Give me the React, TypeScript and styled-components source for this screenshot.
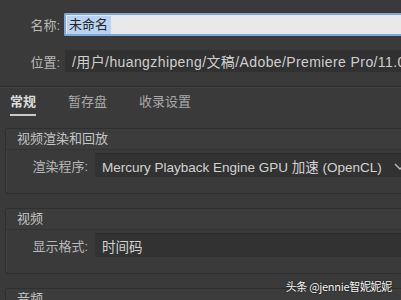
import React from 'react'
import styled, { createGlobalStyle } from 'styled-components'

const GlobalStyle = createGlobalStyle`
  html, body {
    margin: 0;
    padding: 0;
    background: #3a3a3a;
  }
  body {
    font-family: "Liberation Sans", "Noto Sans CJK SC", sans-serif;
    -webkit-font-smoothing: antialiased;
  }
`

const Page = styled.div`
  position: relative;
  width: 401px;
  height: 300px;
  overflow: hidden;
  background: #3a3a3a;
  color: #bdbdbd;
  font-size: 13px;
`

const Header = styled.div`
  display: flex;
  flex-direction: column;
  gap: 14px;
  padding-top: 13px;
`

const FieldRow = styled.div`
  display: flex;
  align-items: center;
  gap: 4px;
`

const FieldLabel = styled.div<{ $w: number }>`
  width: ${(p) => p.$w}px;
  flex: none;
  text-align: right;
  color: #b8b8b8;
  white-space: nowrap;
`

const NameInput = styled.div`
  flex: 1;
  height: 23px;
  box-sizing: border-box;
  border: 2px solid #79a8dc;
  border-right: none;
  border-radius: 2px 0 0 2px;
  background: #e9e9e9;
  display: flex;
  align-items: center;
  padding-left: 1px;
`

const Selected = styled.span`
  background: #b9d3f1;
  color: #262626;
  padding: 1px 3px 1px 2px;
  line-height: 16px;
`

const PathBox = styled.div`
  flex: 1;
  height: 22px;
  margin-left: 1px;
  background: #313131;
  color: #cfcfcf;
  display: flex;
  align-items: center;
  padding-left: 7px;
  white-space: nowrap;
  overflow: hidden;
  font-size: 14px;
  letter-spacing: 0.4px;
`

const Divider = styled.div`
  height: 1px;
  background: #2d2d2d;
  border-bottom: 1px solid #424242;
`

const Tabs = styled.div`
  display: flex;
  gap: 32px;
  padding-left: 10px;
`

const Tab = styled.div<{ $active?: boolean }>`
  display: flex;
  flex-direction: column;
  padding-top: 6px;
  line-height: 16px;
  color: ${(p) => (p.$active ? '#dcdcdc' : '#a9a9a9')};
  font-weight: ${(p) => (p.$active ? 700 : 400)};

  &::after {
    content: '';
    height: 2px;
    margin-top: 4px;
    background: ${(p) => (p.$active ? '#c9c9c9' : 'transparent')};
  }
`

const Sections = styled.div`
  display: flex;
  flex-direction: column;
  gap: 14px;
  padding: 12px 0 0 5px;
`

const Section = styled.div`
  border: 1px solid #2f2f2f;
  border-right: none;
  border-radius: 3px 0 0 3px;
  box-shadow: inset 1px 1px 0 #434343;
`

const SectionTitle = styled.div`
  height: 20px;
  line-height: 20px;
  padding-left: 11px;
  color: #c4c4c4;
  border-bottom: 1px solid #333333;
  background: #3c3c3c;
`

const SectionBody = styled.div`
  padding: 3px 0 16px 0;
`

const SelectRow = styled.div`
  display: flex;
  align-items: center;
  gap: 7px;
`

const Select = styled.div`
  flex: 1;
  height: 23px;
  background: #323232;
  border-top: 1px solid #2b2b2b;
  color: #d2d2d2;
  display: flex;
  align-items: center;
  justify-content: space-between;
  padding-left: 7px;
  white-space: nowrap;
  font-size: 13.5px;
`

const Chevron = styled.svg`
  flex: none;
  margin-right: -6px;
`

const Watermark = styled.div`
  position: absolute;
  right: 9px;
  bottom: 6px;
  color: #f4f4f4;
  font-size: 11px;
  font-family: "Noto Sans CJK SC", sans-serif;
  text-shadow: 0 0 2px rgba(0, 0, 0, 0.8);
  letter-spacing: -0.3px;
`

const sections = [
  { title: '视频渲染和回放', label: '渲染程序:', value: 'Mercury Playback Engine GPU 加速 (OpenCL)', chevron: true },
  { title: '视频', label: '显示格式:', value: '时间码', chevron: false },
  { title: '音频', label: '显示格式:', value: '音频采样', chevron: false },
]

export default function App() {
  return (
    <Page>
      <GlobalStyle />
      <Header>
        <FieldRow>
          <FieldLabel $w={60}>名称:</FieldLabel>
          <NameInput>
            <Selected>未命名</Selected>
          </NameInput>
        </FieldRow>
        <FieldRow>
          <FieldLabel $w={60}>位置:</FieldLabel>
          <PathBox>/用户/huangzhipeng/文稿/Adobe/Premiere Pro/11.0</PathBox>
        </FieldRow>
        <Divider />
      </Header>

      <Tabs>
        <Tab $active>常规</Tab>
        <Tab>暂存盘</Tab>
        <Tab>收录设置</Tab>
      </Tabs>

      <Sections>
        {sections.map((s) => (
          <Section key={s.title}>
            <SectionTitle>{s.title}</SectionTitle>
            <SectionBody>
              <SelectRow>
                <FieldLabel $w={82}>{s.label}</FieldLabel>
                <Select>
                  <span>{s.value}</span>
                  {s.chevron && (
                    <Chevron width="14" height="10" viewBox="0 0 14 10">
                      <path d="M2 3 L7 8 L12 3" fill="none" stroke="#bdbdbd" strokeWidth="1.4" />
                    </Chevron>
                  )}
                </Select>
              </SelectRow>
            </SectionBody>
          </Section>
        ))}
      </Sections>

      <Watermark>头条 @jennie智妮妮妮</Watermark>
    </Page>
  )
}
